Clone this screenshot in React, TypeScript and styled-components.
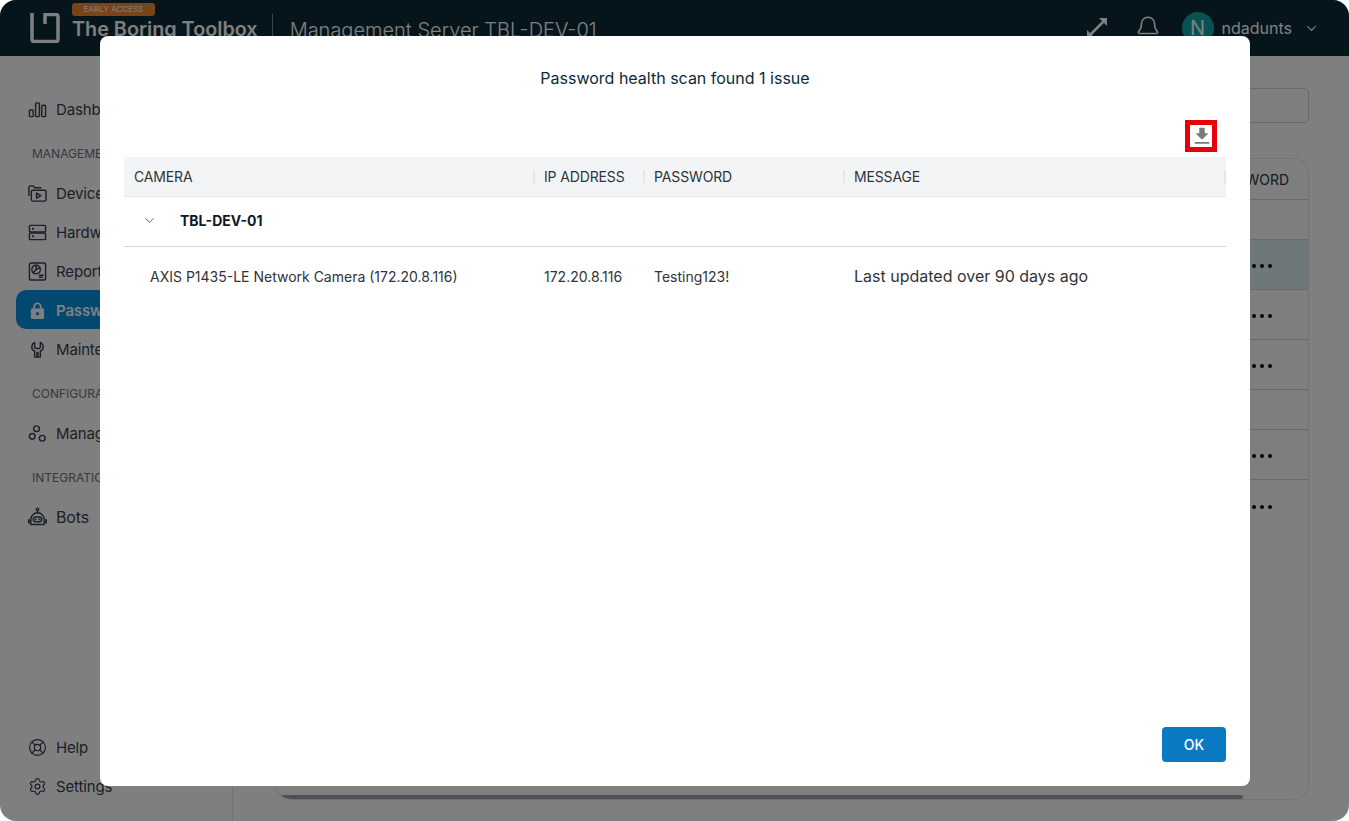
import { ReactNode } from "react";
import styled, { createGlobalStyle } from "styled-components";
import { Bell, ChevronDown, LifeBuoy, Settings } from "lucide-react";

const GlobalStyle = createGlobalStyle`
  html, body {
    margin: 0;
    height: 100%;
    background: #fff;
    font-family: Inter, "Liberation Sans", sans-serif;
  }
`;

const Shell = styled.div`
  position: relative;
  width: 1349px;
  height: 821px;
  border-radius: 16px;
  overflow: hidden;
  display: flex;
  flex-direction: column;
  background: #fff;
`;

const Header = styled.header`
  height: 56px;
  flex: none;
  background: #0c2a38;
  color: #fff;
  display: flex;
  align-items: center;
  padding: 0 30px 0 30px;
`;

const Brand = styled.div`
  position: relative;
  margin-left: 12px;
  padding-top: 2px;
  font-size: 19.8px;
  font-weight: 600;
  line-height: 24px;
  white-space: nowrap;
`;

const Badge = styled.span`
  position: absolute;
  left: 0;
  top: -12px;
  width: 83px;
  height: 13px;
  border-radius: 3px;
  background: #f08a30;
  color: #fff;
  font-size: 8px;
  font-weight: 400;
  line-height: 13px;
  text-align: center;
`;

const ServerName = styled.div`
  margin-left: 14px;
  padding: 4px 0 0 17px;
  height: 28px;
  box-sizing: border-box;
  border-left: 1px solid rgba(255, 255, 255, 0.45);
  font-size: 20px;
  font-weight: 300;
  line-height: 24px;
  white-space: nowrap;
`;

const HeaderRight = styled.div`
  margin-left: auto;
  display: flex;
  align-items: center;
`;

const HeaderIcon = styled.span<{ $gap: number }>`
  display: flex;
  margin-right: ${(p) => p.$gap}px;
  color: #fff;
`;

const Avatar = styled.span`
  width: 32px;
  height: 32px;
  border-radius: 50%;
  background: #13a5a8;
  display: flex;
  align-items: center;
  justify-content: center;
  font-size: 20px;
  font-weight: 400;
`;

const UserName = styled.span`
  margin: 0 12px 0 8px;
  font-size: 16px;
`;

const Body = styled.div`
  flex: 1;
  display: flex;
  min-height: 0;
`;

const Sidebar = styled.nav`
  width: 233px;
  flex: none;
  box-sizing: border-box;
  border-right: 1px solid #e5e7eb;
  padding: 33px 0 16px 16px;
  display: flex;
  flex-direction: column;
`;

const NavItem = styled.div<{ $active?: boolean; $large?: boolean }>`
  height: 39px;
  flex: none;
  box-sizing: border-box;
  display: flex;
  align-items: center;
  gap: 9px;
  padding: ${(p) => (p.$large ? "0" : "1px")} 0 0 12px;
  border-radius: 10px;
  font-size: ${(p) => (p.$large ? "16px" : "15px")};
  font-weight: ${(p) => (p.$active ? 600 : 400)};
  letter-spacing: -0.01em;
  color: ${(p) => (p.$active ? "#fff" : "#374151")};
  background: ${(p) => (p.$active ? "#0690e0" : "transparent")};

  svg {
    flex: none;
    width: 19px;
    height: 19px;
  }
`;

const NavHeading = styled.div`
  height: 45px;
  flex: none;
  box-sizing: border-box;
  padding: 18px 0 0 16px;
  font-size: 12px;
  line-height: 16px;
  color: #6b7280;
`;

const NavBottom = styled.div`
  margin-top: auto;
`;

const Main = styled.main`
  flex: 1;
  min-width: 0;
  padding: 32px 40px 21px 42px;
  display: flex;
  flex-direction: column;
`;

const SearchBox = styled.div`
  align-self: flex-end;
  width: 240px;
  height: 35px;
  box-sizing: border-box;
  border: 1px solid #d1d5db;
  border-radius: 4px;
`;

const Card = styled.div`
  margin-top: 35px;
  flex: 1;
  position: relative;
  border: 1px solid #e5e7eb;
  border-radius: 16px;
  overflow: hidden;
`;

const BackRow = styled.div<{ $height: number; $selected?: boolean; $last?: boolean }>`
  height: ${(p) => p.$height}px;
  box-sizing: border-box;
  border-bottom: ${(p) => (p.$last ? "0" : "1px solid #d1d5db")};
  background: ${(p) => (p.$selected ? "#dceff5" : "transparent")};
  display: flex;
  align-items: center;
  justify-content: flex-end;
  padding-right: 19px;
  font-size: 14px;
  color: #2f343a;
`;

const Dots = styled.span`
  display: flex;
  gap: 4px;
  margin: 2px 17px 0 0;

  i {
    width: 4px;
    height: 4px;
    border-radius: 50%;
    background: #000;
  }
`;

const ScrollThumb = styled.div`
  position: absolute;
  left: 0;
  bottom: 0;
  width: 967px;
  height: 4px;
  background: #9ca3af;
  border-radius: 2px;
`;

const Overlay = styled.div`
  position: absolute;
  inset: 0;
  background: rgba(0, 0, 0, 0.5);
`;

const Modal = styled.div`
  position: absolute;
  left: 100px;
  top: 36px;
  width: 1150px;
  height: 750px;
  box-sizing: border-box;
  background: #fff;
  border-radius: 8px;
  padding: 32px 24px 24px;
  display: flex;
  flex-direction: column;
`;

const ModalTitle = styled.h2`
  margin: 0;
  height: 20px;
  font-size: 16px;
  font-weight: 400;
  line-height: 20px;
  text-align: center;
  color: #0c2a38;
`;

const ExportRow = styled.div`
  margin-top: 32px;
  height: 37px;
  flex: none;
  display: flex;
  justify-content: flex-end;
  padding-right: 9px;
`;

const ExportButton = styled.span`
  width: 32px;
  height: 32px;
  box-sizing: border-box;
  border: 5px solid #e8000b;
  padding-left: 1px;
  display: flex;
  align-items: center;
  color: #7a7a7a;

  svg {
    flex: none;
  }
`;

const Row = styled.div`
  display: grid;
  grid-template-columns: 410px 110px 200px 1fr;
`;

const HeadRow = styled(Row)`
  position: relative;
  height: 40px;
  box-sizing: border-box;
  background: #f3f4f6;
  border-bottom: 1px solid #e5e7eb;

  &::after {
    content: "";
    position: absolute;
    right: 0;
    top: 13px;
    width: 2px;
    height: 14px;
    background: #e5e7eb;
  }
`;

const HeadCell = styled.div<{ $first?: boolean }>`
  display: flex;
  align-items: center;
  padding-left: 10px;
  font-size: 14px;
  letter-spacing: -0.01em;
  color: #2f343a;
  position: relative;

  &::before {
    content: "";
    display: ${(p) => (p.$first ? "none" : "block")};
    position: absolute;
    left: -1px;
    top: 13px;
    width: 2px;
    height: 14px;
    background: #e5e7eb;
  }
`;

const GroupRow = styled.div`
  height: 50px;
  box-sizing: border-box;
  border-bottom: 1px solid #d1d5db;
  display: flex;
  align-items: center;
  padding: 0 0 2px 18px;
  gap: 23px;
  font-size: 14px;
  font-weight: 700;
  color: #111827;

  svg {
    color: #4b5563;
  }
`;

const DataRow = styled(Row)`
  height: 58px;
`;

const Cell = styled.div<{ $indent?: boolean; $large?: boolean }>`
  display: flex;
  align-items: center;
  padding-left: ${(p) => (p.$indent ? "26px" : "10px")};
  font-size: ${(p) => (p.$large ? "16px" : "14px")};
  color: #2f343a;
`;

const Footer = styled.div`
  margin-top: auto;
  display: flex;
  justify-content: flex-end;
`;

const OkButton = styled.button`
  width: 64px;
  height: 35px;
  border: 0;
  border-radius: 4px;
  background: #0a7ac4;
  color: #fff;
  font: 500 14px Inter, "Liberation Sans", sans-serif;
`;

const stroke = {
  fill: "none",
  stroke: "currentColor",
  strokeWidth: 1.5,
  strokeLinecap: "round" as const,
  strokeLinejoin: "round" as const,
};

const icons: Record<string, ReactNode> = {
  dashboard: (
    <svg viewBox="0 0 20 20" {...stroke}>
      <rect x="1.5" y="10.5" width="4" height="7" rx="1" />
      <rect x="8" y="3" width="4" height="14.500" rx="1" />
      <rect x="14.500" y="5.500" width="4" height="12" rx="1" />
    </svg>
  ),
  devices: (
    <svg viewBox="0 0 20 20" {...stroke}>
      <path d="M1 12V3.500A1.500 1.500 0 0 1 2.500 2h3l1.500 2h6.500" />
      <rect x="3.500" y="6.500" width="15.500" height="11.500" rx="1.500" />
      <path d="M9 9.500v5.500l4.500-2.750z" />
    </svg>
  ),
  hardware: (
    <svg viewBox="0 0 20 20" {...stroke}>
      <rect x="1.500" y="2.500" width="17" height="7" rx="1" />
      <rect x="1.500" y="10.500" width="17" height="7" rx="1" />
      <path d="M5 6h.5M5 14h.5" strokeWidth="2" />
    </svg>
  ),
  reports: (
    <svg viewBox="0 0 20 20" {...stroke}>
      <rect x="1.500" y="1" width="17" height="18" rx="2" />
      <circle cx="8.500" cy="8" r="4.500" />
      <path d="M8.500 8V3.500M8.500 8l4-2M8.500 8l-3 3.300M12 14h4M12 16h3" />
    </svg>
  ),
  lock: (
    <svg viewBox="0 0 20 20">
      <path
        fill="currentColor"
        fillRule="evenodd"
        d="M5.500 8V6a4.500 4.500 0 0 1 9 0v2H16a1.500 1.500 0 0 1 1 1.500v8A1.500 1.500 0 0 1 15.500 19h-11A1.500 1.500 0 0 1 3 17.500v-8A1.500 1.500 0 0 1 4.500 8zm2 0h5V6a2.500 2.500 0 0 0-5 0zM10 11.700a1.800 1.800 0 1 0 0 3.600 1.800 1.800 0 0 0 0-3.600z"
      />
    </svg>
  ),
  maintenance: (
    <svg viewBox="0 0 20 20" {...stroke}>
      <path d="M7 2.500C5 3.500 4 5.500 4 7.500c0 2 1.200 3.500 3 4.300V18h2.500v-5h1v5H13v-6.200c1.800-.8 3-2.300 3-4.300 0-2-1-4-3-5V7c0 1-1.300 2-3 2S7 8 7 7z" />
    </svg>
  ),
  manage: (
    <svg viewBox="0 0 20 20" {...stroke}>
      <circle cx="9" cy="5" r="3" />
      <circle cx="4.500" cy="13" r="3" />
      <circle cx="15" cy="15" r="3" />
    </svg>
  ),
  bots: (
    <svg viewBox="0 0 20 20" {...stroke}>
      <circle cx="10" cy="2.500" r="1.300" />
      <path d="M10 4v2" />
      <path d="M3 18.500V13a6.500 6.500 0 0 1 14 0v5.500z" />
      <rect x="5.500" y="10.500" width="9" height="5" rx="2.500" />
      <path d="M8 13h.2M12 13h.2M1 13.500v3M19 13.500v3" strokeWidth="2" />
    </svg>
  ),
};

const tableRows = [
  { height: 41, text: "PASSWORD" },
  { height: 40 },
  { height: 50, dots: true, selected: true },
  { height: 50, dots: true },
  { height: 50, dots: true },
  { height: 40 },
  { height: 50, dots: true },
  { height: 51, dots: true, last: true },
];

function Nav({
  icon,
  label,
  active,
  large,
}: {
  icon: ReactNode;
  label: string;
  active?: boolean;
  large?: boolean;
}) {
  return (
    <NavItem $active={active} $large={large}>
      {icon}
      {label}
    </NavItem>
  );
}

export default function App() {
  return (
    <Shell>
      <GlobalStyle />
      <Header>
        <svg width="30" height="30" viewBox="0 0 30 30" fill="none">
          <path
            d="M2 0V26.500a2 2 0 0 0 2 2h22a2 2 0 0 0 2-2v-23a2 2 0 0 0-2-2H15V11"
            stroke="#fff"
            strokeWidth="3.500"
          />
        </svg>
        <Brand>
          <Badge>EARLY ACCESS</Badge>
          The Boring Toolbox
        </Brand>
        <ServerName>Management Server TBL-DEV-01</ServerName>
        <HeaderRight>
          <HeaderIcon $gap={27}>
            <svg width="22" height="22" viewBox="0 0 22 22" fill="#fff" stroke="none">
              <path d="M13 1h8v8zM1 13v8h8z" />
              <path d="M4 18L18 4" stroke="#fff" strokeWidth="2.500" />
            </svg>
          </HeaderIcon>
          <HeaderIcon $gap={21}>
            <Bell size={26} strokeWidth={1.4} />
          </HeaderIcon>
          <Avatar>N</Avatar>
          <UserName>ndadunts</UserName>
          <ChevronDown size={15} />
        </HeaderRight>
      </Header>
      <Body>
        <Sidebar>
          <Nav icon={icons.dashboard} label="Dashboard" />
          <NavHeading>MANAGEMENT</NavHeading>
          <Nav icon={icons.devices} label="Devices" />
          <Nav icon={icons.hardware} label="Hardware" />
          <Nav icon={icons.reports} label="Reports" />
          <Nav icon={icons.lock} label="Passwords" active />
          <Nav icon={icons.maintenance} label="Maintenance" />
          <NavHeading>CONFIGURATION</NavHeading>
          <Nav icon={icons.manage} label="Manage" />
          <NavHeading>INTEGRATIONS</NavHeading>
          <Nav icon={icons.bots} label="Bots" large />
          <NavBottom>
            <Nav icon={<LifeBuoy strokeWidth={1.5} />} label="Help" />
            <Nav icon={<Settings strokeWidth={1.5} />} label="Settings" />
          </NavBottom>
        </Sidebar>
        <Main>
          <SearchBox />
          <Card>
            {tableRows.map((row, i) => (
              <BackRow key={i} $height={row.height} $selected={row.selected} $last={row.last}>
                {row.text}
                {row.dots && (
                  <Dots>
                    <i />
                    <i />
                    <i />
                  </Dots>
                )}
              </BackRow>
            ))}
            <ScrollThumb />
          </Card>
        </Main>
      </Body>
      <Overlay />
      <Modal>
        <ModalTitle>Password health scan found 1 issue</ModalTitle>
        <ExportRow>
          <ExportButton>
            <svg width="22" height="22" viewBox="0 0 24 24" fill="currentColor">
              <path d="M19 9h-4V3H9v6H5l7 7 7-7zM4 18.500V20.500h16v-2H4z" />
            </svg>
          </ExportButton>
        </ExportRow>
        <HeadRow>
          <HeadCell $first>CAMERA</HeadCell>
          <HeadCell>IP ADDRESS</HeadCell>
          <HeadCell>PASSWORD</HeadCell>
          <HeadCell>MESSAGE</HeadCell>
        </HeadRow>
        <GroupRow>
          <ChevronDown size={15} strokeWidth={1.5} />
          TBL-DEV-01
        </GroupRow>
        <DataRow>
          <Cell $indent>AXIS P1435-LE Network Camera (172.20.8.116)</Cell>
          <Cell>172.20.8.116</Cell>
          <Cell>Testing123!</Cell>
          <Cell $large>Last updated over 90 days ago</Cell>
        </DataRow>
        <Footer>
          <OkButton>OK</OkButton>
        </Footer>
      </Modal>
    </Shell>
  );
}
